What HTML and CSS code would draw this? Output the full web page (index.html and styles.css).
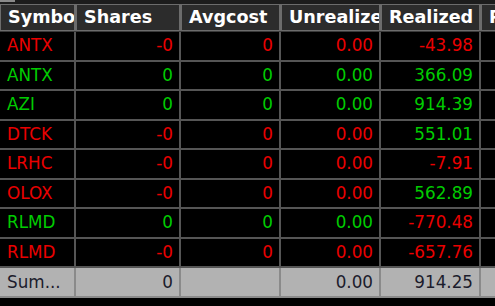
FILE: index.html
```html
<!DOCTYPE html>
<html>
<head>
<meta charset="utf-8">
<link rel="stylesheet" href="styles.css">
</head>
<body>
<div class="topstrip"><span class="grip"></span></div>
<div class="grid">
  <div class="row head">
    <div class="c c1">Symbol</div>
    <div class="c c2">Shares</div>
    <div class="c c3">Avgcost</div>
    <div class="c c4">Unrealized</div>
    <div class="c c5">Realized</div>
    <div class="c c6">PnL</div>
  </div>
  <div class="row red">
    <div class="c c1">ANTX</div><div class="c c2 n">-0</div><div class="c c3 n">0</div><div class="c c4 n">0.00</div><div class="c c5 n">-43.98</div><div class="c c6"></div>
  </div>
  <div class="row green">
    <div class="c c1">ANTX</div><div class="c c2 n">0</div><div class="c c3 n">0</div><div class="c c4 n">0.00</div><div class="c c5 n">366.09</div><div class="c c6"></div>
  </div>
  <div class="row green">
    <div class="c c1">AZI</div><div class="c c2 n">0</div><div class="c c3 n">0</div><div class="c c4 n">0.00</div><div class="c c5 n">914.39</div><div class="c c6"></div>
  </div>
  <div class="row red">
    <div class="c c1">DTCK</div><div class="c c2 n">-0</div><div class="c c3 n">0</div><div class="c c4 n">0.00</div><div class="c c5 n g">551.01</div><div class="c c6"></div>
  </div>
  <div class="row red">
    <div class="c c1">LRHC</div><div class="c c2 n">-0</div><div class="c c3 n">0</div><div class="c c4 n">0.00</div><div class="c c5 n">-7.91</div><div class="c c6"></div>
  </div>
  <div class="row red">
    <div class="c c1">OLOX</div><div class="c c2 n">-0</div><div class="c c3 n">0</div><div class="c c4 n">0.00</div><div class="c c5 n g">562.89</div><div class="c c6"></div>
  </div>
  <div class="row green">
    <div class="c c1">RLMD</div><div class="c c2 n">0</div><div class="c c3 n">0</div><div class="c c4 n">0.00</div><div class="c c5 n r">-770.48</div><div class="c c6"></div>
  </div>
  <div class="row red">
    <div class="c c1">RLMD</div><div class="c c2 n">-0</div><div class="c c3 n">0</div><div class="c c4 n">0.00</div><div class="c c5 n">-657.76</div><div class="c c6"></div>
  </div>
  <div class="row sum">
    <div class="c c1">Sum...</div><div class="c c2 n">0</div><div class="c c3 n"></div><div class="c c4 n">0.00</div><div class="c c5 n">914.25</div><div class="c c6"></div>
  </div>
</div>
</body>
</html>
```
FILE: styles.css
```css
html, body {
  margin: 0;
  padding: 0;
  background: #000;
  width: 495px;
  height: 306px;
  overflow: hidden;
  font-family: "DejaVu Sans", sans-serif;
  font-size: 16.8px;
}
.topstrip {
  height: 4px;
  background: #1c1c1c;
}
.grip {
  display: block;
  width: 15px;
  height: 2px;
  background: #8a8a8a;
}
.grid {
  display: flex;
  flex-direction: column;
  width: 600px;
}
.row {
  display: grid;
  grid-template-columns: 76px 105px 100px 100px 100px 119px;
  height: 29.5px;
  box-sizing: border-box;
  border-bottom: 2px solid #555;
}
.c {
  box-sizing: border-box;
  border-right: 2px solid #555;
  white-space: nowrap;
  overflow: hidden;
  display: flex;
  align-items: center;
  padding: 0 6px 0 7px;
  line-height: 1;
}
.n {
  justify-content: flex-end;
}
.head {
  height: 28px;
  border-bottom: 1px solid #3a3a3a;
  background: #1c1c1c;
}
.head .c {
  background: #2c2c2c;
  border: 1px solid #6c6c6c;
  border-right: 2px solid #6c6c6c;
  color: #fff;
  font-weight: bold;
  font-size: 17.6px;
  padding-left: 7px;
  text-overflow: clip;
}
.red { color: #ea0000; }
.green { color: #00cc00; }
.g { color: #00cc00; }
.r { color: #ea0000; }
.sum {
  height: 30px;
  background: #b2b2b2;
  color: #1c1c2c;
  border-bottom: 2px solid #8a8a8a;
}
.sum .c {
  border-right-color: #8a8a8a;
}
```
